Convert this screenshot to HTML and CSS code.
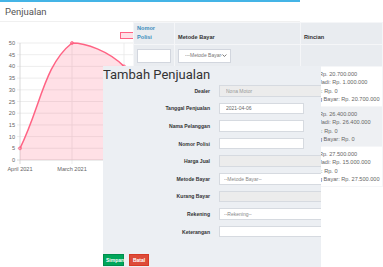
FILE: index.html
```html
<!DOCTYPE html>
<html lang="id">
<head>
  <meta charset="UTF-8">
  <meta name="viewport" content="width=device-width, initial-scale=1.0">
  <title>Penjualan</title>
  <link rel="stylesheet" href="styles.css">
</head>
<body>
  <div class="box">
    <div class="box-header">Penjualan</div>
    <div class="box-body">
      <svg class="chart" width="133" height="150" viewBox="0 22 133 150">
        <!-- grid -->
        <g class="grid">
          <line x1="17" y1="148.3" x2="133" y2="148.3" />
          <line x1="17" y1="136.6" x2="133" y2="136.6" />
          <line x1="17" y1="124.9" x2="133" y2="124.9" />
          <line x1="17" y1="113.2" x2="133" y2="113.2" />
          <line x1="17" y1="101.5" x2="133" y2="101.5" />
          <line x1="17" y1="89.8" x2="133" y2="89.8" />
          <line x1="17" y1="78.1" x2="133" y2="78.1" />
          <line x1="17" y1="66.4" x2="133" y2="66.4" />
          <line x1="17" y1="54.7" x2="133" y2="54.7" />
          <line x1="17" y1="43" x2="133" y2="43" />
          <line x1="72" y1="43" x2="72" y2="164" />
          <line x1="124" y1="43" x2="124" y2="164" />
        </g>
        <g class="axis">
          <line x1="17" y1="160" x2="133" y2="160" />
          <line x1="20" y1="43" x2="20" y2="164" />
        </g>
        <g class="y-labels">
          <text x="15" y="45">50</text>
          <text x="15" y="56.7">45</text>
          <text x="15" y="68.4">40</text>
          <text x="15" y="80.1">35</text>
          <text x="15" y="91.8">30</text>
          <text x="15" y="103.5">25</text>
          <text x="15" y="115.2">20</text>
          <text x="15" y="126.9">15</text>
          <text x="15" y="138.6">10</text>
          <text x="15" y="150.3">5</text>
          <text x="15" y="162">0</text>
        </g>
        <g class="x-labels">
          <text x="20" y="170.5">April 2021</text>
          <text x="72" y="170.5">March 2021</text>
        </g>
        <path class="area" d="M20,148.3 C40.8,106.2 44,65 72,43 C85.6,43 108.6,50.9 124,66.4 C150,92.9 160,140 176,148.3 L176,160 L20,160 Z" />
        <path class="line" d="M20,148.3 C40.8,106.2 44,65 72,43 C85.6,43 108.6,50.9 124,66.4 C150,92.9 160,140 176,148.3" />
        <circle class="dot" cx="20" cy="148.3" r="1.5" />
        <circle class="dot" cx="72" cy="43" r="1.5" />
        <circle class="dot" cx="124" cy="66.4" r="1.5" />
        <rect class="legend" x="120.5" y="32.5" width="20" height="6" />
      </svg>

      <table class="sales-table">
        <colgroup>
          <col class="col-nopol">
          <col class="col-metode">
          <col class="col-rincian">
        </colgroup>
        <thead>
          <tr class="head">
            <th><a href="#">Nomor Polisi</a></th>
            <th>Metode Bayar</th>
            <th>Rincian</th>
          </tr>
          <tr class="filters">
            <td><input class="filter-input" type="text"></td>
            <td>
              <div class="filter-select">
                <span>---Metode Bayar---</span>
                <svg width="5" height="3" viewBox="0 0 5 3"><polyline points="0.5,0.5 2.5,2.5 4.5,0.5" /></svg>
              </div>
            </td>
            <td></td>
          </tr>
        </thead>
        <tbody>
          <tr>
            <td></td>
            <td></td>
            <td class="rincian">Total: Rp. 20.700.000<br>Uang Jadi: Rp. 1.000.000<br>Diskon: Rp. 0<br>Kurang Bayar: Rp. 20.700.000</td>
          </tr>
          <tr>
            <td></td>
            <td></td>
            <td class="rincian">Total: Rp. 26.400.000<br>Uang Jadi: Rp. 26.400.000<br>Diskon: Rp. 0<br>Kurang Bayar: Rp. 0</td>
          </tr>
          <tr>
            <td></td>
            <td></td>
            <td class="rincian">Total: Rp. 27.500.000<br>Uang Jadi: Rp. 15.000.000<br>Diskon: Rp. 0<br>Kurang Bayar: Rp. 27.500.000</td>
          </tr>
        </tbody>
      </table>
    </div>
  </div>

  <div class="modal">
    <h4 class="modal-title">Tambah Penjualan</h4>
    <form class="form">
      <label>Dealer</label>
      <input class="control wide" type="text" value="Nona Motor" disabled>

      <label>Tanggal Penjualan</label>
      <input class="control" type="text" value="2021-04-06">

      <label>Nama Pelanggan</label>
      <input class="control" type="text">

      <label>Nomor Polisi</label>
      <input class="control" type="text">

      <label>Harga Jual</label>
      <input class="control wide" type="text" disabled>

      <label>Metode Bayar</label>
      <select class="control wide"><option>--Metode Bayar--</option></select>

      <label>Kurang Bayar</label>
      <input class="control wide" type="text" disabled>

      <label>Rekening</label>
      <select class="control wide"><option>--Rekening--</option></select>

      <label>Keterangan</label>
      <input class="control wide" type="text">
    </form>
    <div class="modal-footer">
      <button class="btn btn-save" type="button">Simpan</button>
      <button class="btn btn-cancel" type="button">Batal</button>
    </div>
  </div>
</body>
</html>
```

FILE: styles.css
```css
* {
  box-sizing: border-box;
}

body {
  margin: 0;
  height: 267px;
  overflow: hidden;
  position: relative;
  background: #fff;
  color: #333;
  font-family: "Liberation Sans", Arial, sans-serif;
}

.box {
  width: 300px;
  border-top: 2px solid #44b4e6;
}

.box-header {
  height: 20px;
  line-height: 19px;
  padding-left: 5px;
  font-family: Roboto, "Liberation Sans", sans-serif;
  font-size: 9.5px;
  color: #555;
  border-bottom: 1px solid #f0f0f0;
}

.box-body {
  display: flex;
  width: 382px;
}

/* chart */
.chart {
  display: block;
  flex: none;
}

.chart .grid line {
  stroke: #e8e8e8;
  stroke-width: 0.8;
}

.chart .axis line {
  stroke: #cfcfcf;
  stroke-width: 0.8;
}

.chart text {
  font-family: "Liberation Sans", Arial, sans-serif;
  font-size: 5.6px;
  fill: #666;
}

.chart .y-labels text {
  text-anchor: end;
}

.chart .x-labels text {
  text-anchor: middle;
}

.chart .area {
  fill: rgba(255, 99, 132, 0.2);
}

.chart .line {
  fill: none;
  stroke: rgb(255, 99, 132);
  stroke-width: 1.5;
}

.chart .dot {
  fill: rgba(255, 99, 132, 0.3);
  stroke: rgb(255, 99, 132);
  stroke-width: 0.8;
}

.chart .legend {
  fill: rgba(255, 99, 132, 0.2);
  stroke: rgb(255, 99, 132);
  stroke-width: 1;
}

/* table */
.sales-table {
  flex: none;
  width: 249px;
  border-collapse: collapse;
  table-layout: fixed;
  font-size: 5.6px;
  line-height: 8.5px;
}

.col-nopol { width: 41px; }
.col-metode { width: 126px; }
.col-rincian { width: 82px; }

.sales-table th,
.sales-table td {
  border: 1px solid #f5f6f8;
  padding: 2.5px 3px;
  text-align: left;
  vertical-align: top;
  color: #555;
}

.sales-table thead tr {
  background: #e9ecf0;
}

.sales-table .head th {
  height: 22px;
  padding: 1px 3px 3px;
  vertical-align: bottom;
  font-weight: bold;
  color: #333;
}

.sales-table .head a {
  color: #3c8dbc;
  text-decoration: none;
}

.sales-table .filters td {
  height: 22px;
  padding: 3px 3px;
  vertical-align: middle;
}

.filter-input {
  display: block;
  width: 34px;
  height: 14px;
  border: 1px solid #d2d6de;
  background: #fff;
}

.filter-select {
  display: flex;
  align-items: center;
  justify-content: space-between;
  width: 53px;
  height: 14px;
  padding: 0 3px 0 6px;
  border: 1px solid #d2d6de;
  background: #fff;
  overflow: hidden;
  font-size: 5px;
  color: #777;
}

.filter-select span {
  white-space: nowrap;
  overflow: hidden;
  width: 38px;
}

.filter-select svg polyline {
  fill: none;
  stroke: #555;
  stroke-width: 0.8;
}

.sales-table tbody tr:nth-child(even) {
  background: #eef0f3;
}

.sales-table .rincian {
  white-space: nowrap;
  color: #666;
}

/* modal */
.modal {
  position: absolute;
  left: 103px;
  top: 66px;
  width: 218px;
  height: 201px;
  background: #eceff3;
  overflow: hidden;
}

.modal-title {
  margin: 0;
  font-family: Roboto, "Liberation Sans", sans-serif;
  font-size: 13px;
  font-weight: 400;
  line-height: 18px;
  color: #333;
}

.form {
  display: grid;
  grid-template-columns: 107px auto;
  grid-auto-rows: 11.6px;
  column-gap: 9px;
  row-gap: 6px;
  margin: 1px 0 0;
}

.form label {
  align-self: center;
  text-align: right;
  font-size: 5.1px;
  font-weight: bold;
  color: #333;
}

.control {
  width: 85px;
  height: 11.6px;
  margin: 0;
  padding: 0 6px;
  border: 1px solid #d6dae0;
  border-radius: 0;
  background: #fff;
  font-family: "Liberation Sans", Arial, sans-serif;
  font-size: 5px;
  color: #666;
  appearance: none;
  -webkit-appearance: none;
}

.control.wide {
  width: 110px;
}

.control:disabled {
  background: #ececec;
  color: #999;
}

select.control {
  color: #888;
  padding-left: 4px;
}

.modal-footer {
  display: flex;
  gap: 5px;
  margin-top: 16.5px;
}

.btn {
  height: 12px;
  padding: 0 2px;
  border: 1px solid;
  border-radius: 0;
  font-family: "Liberation Sans", Arial, sans-serif;
  font-size: 5px;
  font-weight: bold;
  color: #fff;
}

.btn-save {
  width: 21px;
  background: #00a65a;
  border-color: #008d4c;
}

.btn-cancel {
  width: 20px;
  background: #dd4b39;
  border-color: #d73925;
}
```
